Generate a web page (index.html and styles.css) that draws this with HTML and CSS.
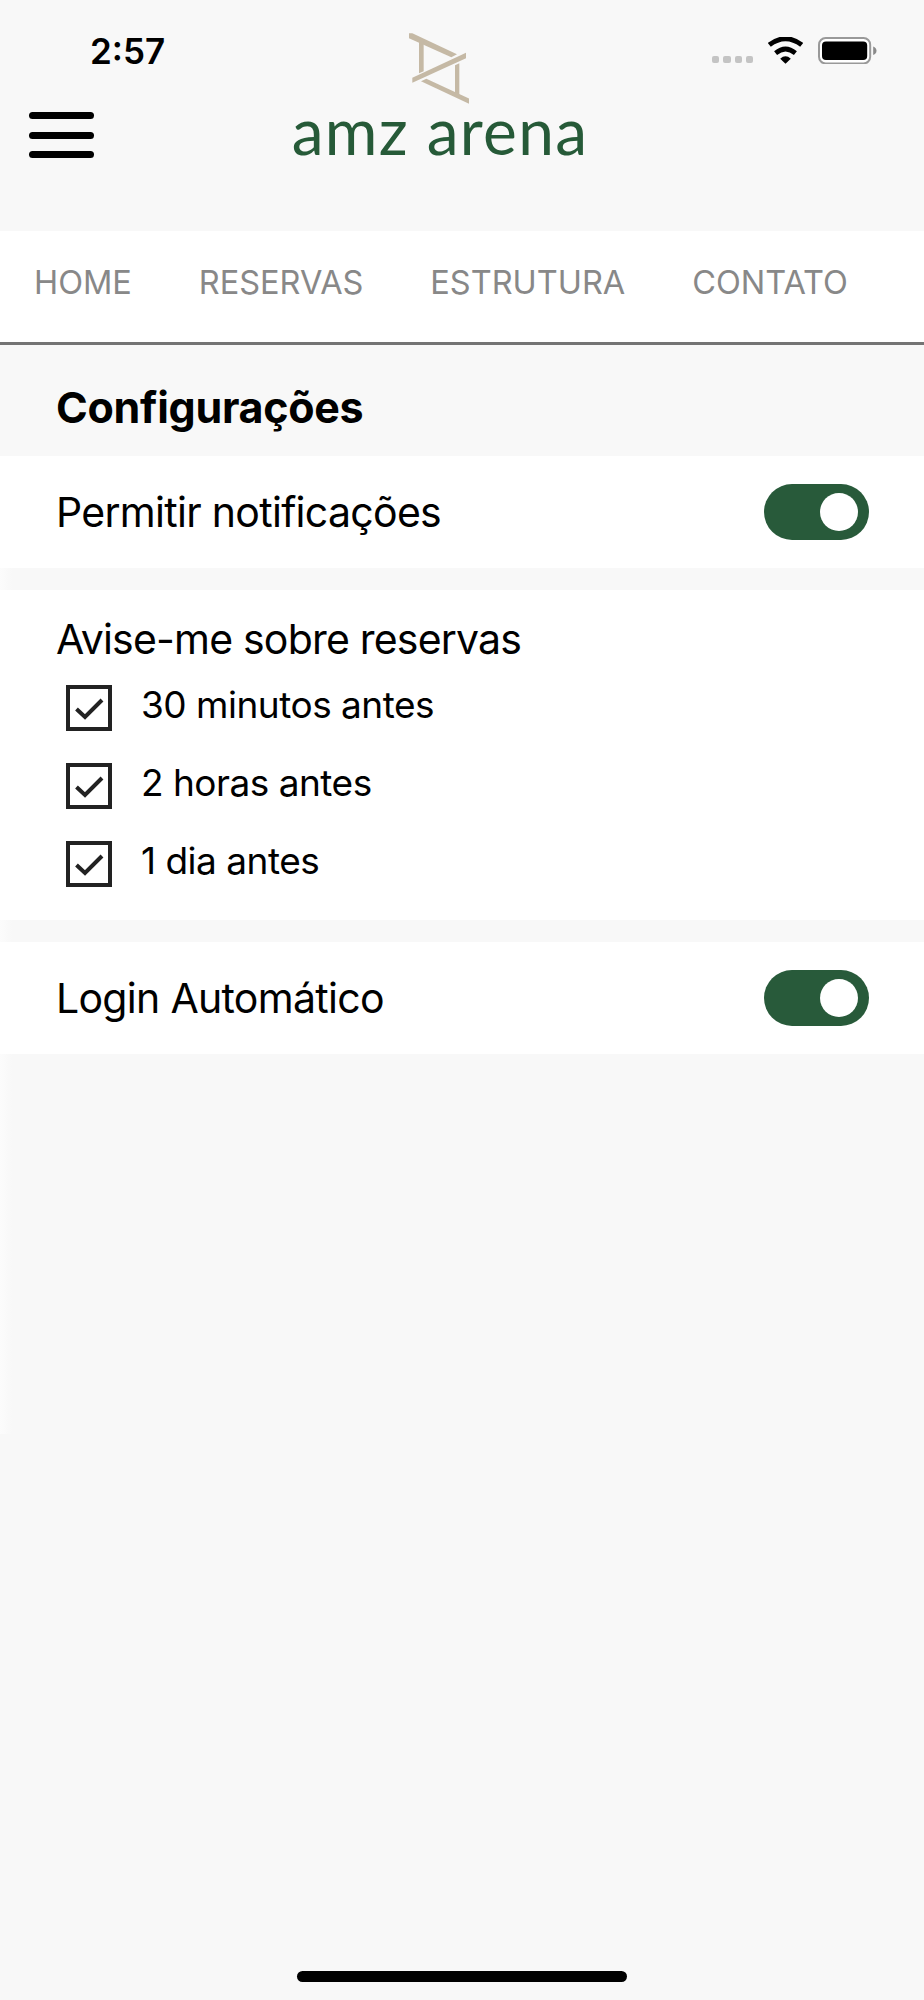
FILE: index.html
```html
<!DOCTYPE html>
<html lang="pt-BR">
<head>
  <meta charset="UTF-8" />
  <meta name="viewport" content="width=device-width, initial-scale=1.0"/>
  <title>AMZ Arena – Configurações</title>
  <link rel="stylesheet" href="styles.css">
</head>

<body>
  <header>
    <div class="header-left">
      <span class="time">2:57</span>
      <button class="menu" aria-label="Menu">
        <span></span>
        <span></span>
        <span></span>
      </button>
    </div>

    <div class="logo">
      <svg class="logo-mark" viewBox="387 68 180 212" fill="#c5b9a5">
        <path d="M387 68h10L531 131L514 140L387 83z"/>
        <path d="M417 90h14v92l-14 6z"/>
        <path d="M397 202L558 127v16L397 217z"/>
        <path d="M525 164l13-6v98h-13z"/>
        <path d="M423 212l16-7L567 264v16z"/>
      </svg>
      <span class="logo-text">amz arena</span>
    </div>

    <div class="status">
      <div class="signal">
        <i></i><i></i><i></i><i></i>
      </div>
      <svg class="wifi" viewBox="0 0 106 80">
        <path d="M4 23Q53 -14 102 23" fill="none" stroke="#000" stroke-width="15"/>
        <path d="M23 48Q53 23 83 48" fill="none" stroke="#000" stroke-width="14"/>
        <path d="M37 65Q53 50 69 65L53 80z"/>
      </svg>
      <svg class="battery" viewBox="0 0 176 82">
        <rect x="3" y="3" width="154" height="76" rx="20" fill="#fff" stroke="#999" stroke-width="6"/>
        <rect x="12" y="13" width="136" height="56" rx="12"/>
        <path d="M166 28q10 4 10 13t-10 13z" fill="#8a8a8a"/>
      </svg>
    </div>
  </header>

  <nav>
    <a href="#">HOME</a>
    <a href="#">RESERVAS</a>
    <a href="#">ESTRUTURA</a>
    <a href="#">CONTATO</a>
  </nav>

  <h1>Configurações</h1>

  <main>
    <section class="row">
      <span class="label">Permitir notificações</span>
      <span class="toggle"></span>
    </section>

    <section class="reminders">
      <h2 class="label">Avise-me sobre reservas</h2>
      <ul>
        <li>
          <svg viewBox="0 0 46 46"><rect x="2" y="2" width="42" height="42"/><path d="M10.5 24L19 32L36 15"/></svg>
          <span>30 minutos antes</span>
        </li>
        <li>
          <svg viewBox="0 0 46 46"><rect x="2" y="2" width="42" height="42"/><path d="M10.5 24L19 32L36 15"/></svg>
          <span>2 horas antes</span>
        </li>
        <li>
          <svg viewBox="0 0 46 46"><rect x="2" y="2" width="42" height="42"/><path d="M10.5 24L19 32L36 15"/></svg>
          <span>1 dia antes</span>
        </li>
      </ul>
    </section>

    <section class="row">
      <span class="label">Login Automático</span>
      <span class="toggle"></span>
    </section>
  </main>

  <footer>
    <div class="home-indicator"></div>
  </footer>
</body>
</html>
```
FILE: styles.css
```css
* {
  margin: 0;
  padding: 0;
  box-sizing: border-box;
}

body {
  font-family: Inter, sans-serif;
  background: #f8f8f8;
  color: #000;
  display: flex;
  flex-direction: column;
  height: 2000px;
  overflow: hidden;
}

a {
  text-decoration: none;
}

header {
  display: grid;
  grid-template-columns: 293px 292px 1fr;
  height: 231px;
}

.header-left {
  padding: 30px 0 0 29px;
}

.time {
  display: block;
  padding-left: 61px;
  font-size: 35px;
  font-weight: 600;
  line-height: 42px;
}

.menu {
  display: flex;
  flex-direction: column;
  gap: 12.5px;
  width: 65px;
  margin-top: 40px;
  background: none;
  border: none;
}

.menu span {
  width: 65px;
  height: 7px;
  border-radius: 4px;
  background: #000;
}

.logo {
  display: flex;
  flex-direction: column;
  align-items: center;
  padding-top: 32.5px;
}

.logo-mark {
  width: 60px;
  height: 71px;
}

.logo-text {
  padding-left: 2px;
  font-family: Lato, sans-serif;
  font-size: 64px;
  line-height: 54px;
  letter-spacing: 1.3px;
  white-space: nowrap;
  color: #265a38;
}

.status {
  display: flex;
  align-items: flex-start;
  padding: 36.5px 0 0 127px;
}

.signal {
  display: flex;
  gap: 4px;
  padding-top: 19px;
}

.signal i {
  width: 7.3px;
  height: 7.3px;
  border-radius: 2px;
  background: #c4c4c4;
}

.wifi {
  width: 35px;
  height: 27px;
  margin-left: 15px;
}

.battery {
  width: 58.5px;
  height: 27.5px;
  margin-left: 15px;
}

nav {
  display: flex;
  justify-content: space-between;
  height: 114px;
  padding: 31px 76px 0 34px;
  background: #fff;
  border-bottom: 3px solid #747474;
  font-size: 32.5px;
  font-weight: 400;
  line-height: 41px;
}

nav a {
  color: #888;
}

h1 {
  height: 111px;
  padding: 36px 56px 0;
  font-size: 43px;
  font-weight: 700;
  line-height: 52px;
  letter-spacing: -0.3px;
}

main {
  display: flex;
  flex-direction: column;
  gap: 22px;
  height: 978px;
  background: linear-gradient(to right, #fcfcfc, #f8f8f8 12px);
}

section {
  background: #fff;
}

.row {
  display: flex;
  justify-content: space-between;
  align-items: center;
  height: 112px;
  padding: 0 55px 0 56px;
}

.label {
  font-size: 41px;
  font-weight: 400;
  line-height: 50px;
  letter-spacing: -0.7px;
}

.toggle {
  display: flex;
  justify-content: flex-end;
  width: 105px;
  height: 56px;
  padding: 9px 11px;
  border-radius: 28px;
  background: #285a3a;
}

.toggle::after {
  content: "";
  width: 38px;
  height: 38px;
  border-radius: 50%;
  background: #fff;
}

.reminders {
  height: 330px;
  padding: 24px 56px 0;
}

.reminders .label {
  letter-spacing: -0.8px;
}

.reminders ul {
  list-style: none;
  padding: 21px 0 0 10px;
}

.reminders li {
  display: flex;
  height: 78px;
  font-size: 37px;
  line-height: 39px;
  letter-spacing: -0.5px;
}

.reminders svg {
  width: 46px;
  height: 46px;
  margin-right: 29px;
  fill: none;
  stroke: #222;
  stroke-width: 4;
}

footer {
  margin-top: auto;
  padding-bottom: 18px;
}

.home-indicator {
  width: 330px;
  height: 11px;
  margin: 0 auto;
  border-radius: 6px;
  background: #000;
}
```
